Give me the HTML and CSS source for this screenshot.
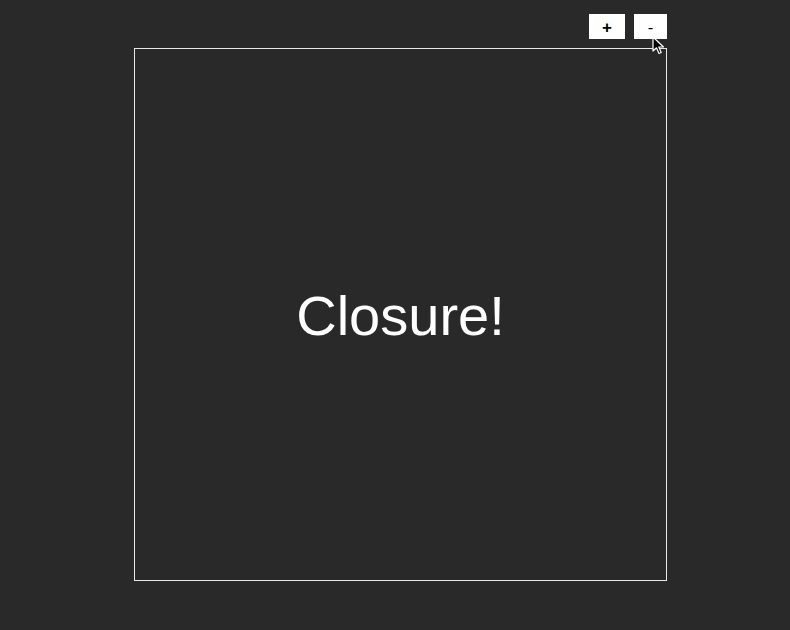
FILE: index.html
```html
<!DOCTYPE html>
<html>
<head>
<meta charset="utf-8">
<link rel="stylesheet" href="styles.css">
</head>
<body>
<div class="wrap">
  <div class="toolbar">
    <button class="btn btn-plus">+</button>
    <button class="btn btn-minus">-</button>
    <svg class="cursor" width="14" height="20" viewBox="0 0 14 20"><path d="M1 1 L1 15 L4.5 11.8 L7 17.5 L9.2 16.5 L6.8 11 L11.5 11 Z" fill="#000" stroke="#fff" stroke-width="1.2" stroke-linejoin="round"/></svg>
  </div>
  <div class="stage">
    <div class="label">Closure!</div>
  </div>
</div>
</body>
</html>
```
FILE: styles.css
```css
html, body {
  margin: 0;
  padding: 0;
  background: #292929;
  height: 100%;
}
.wrap {
  width: 533px;
  margin-left: 134px;
  padding-top: 14px;
}
.toolbar {
  position: relative;
  display: flex;
  justify-content: flex-end;
  gap: 9px;
  height: 25px;
  margin-bottom: 9px;
}
.btn {
  box-sizing: border-box;
  border: none;
  background: #fff;
  color: #000;
  height: 25px;
  padding: 2px 0 0 0;
  font-family: "Liberation Sans", Arial, sans-serif;
  font-size: 17px;
  font-weight: 700;
  line-height: 23px;
  border-radius: 0;
}
.btn-plus { width: 36px; }
.btn-minus { width: 33px; font-weight: 400; }
.cursor {
  position: absolute;
  right: 1px;
  top: 22px;
}
.stage {
  box-sizing: border-box;
  width: 533px;
  height: 533px;
  border: 1px solid #e8e8e8;
  display: flex;
  align-items: center;
  justify-content: center;
}
.label {
  color: #fff;
  font-family: "Liberation Sans", Arial, sans-serif;
  font-size: 56px;
  margin-top: 2px;
}
```
